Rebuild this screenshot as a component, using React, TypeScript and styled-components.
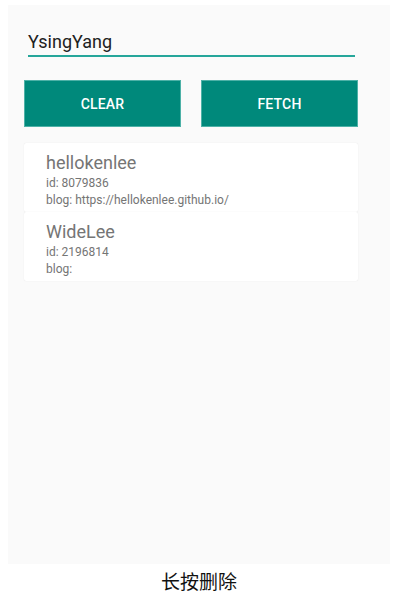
import React from "react";
import styled, { createGlobalStyle } from "styled-components";

const Global = createGlobalStyle`
  html, body { margin: 0; padding: 0; background: #ffffff; }
  body { font-family: Roboto, "Noto Sans", sans-serif; }
`;

const Page = styled.div`
  display: flex;
  flex-direction: column;
  align-items: flex-start;
  padding: 5px 0 0 8px;
`;

const Screen = styled.div`
  width: 382px;
  height: 559px;
  background: #fafafa;
  box-sizing: border-box;
  display: flex;
  flex-direction: column;
  padding: 0 0 0 16px;
`;

const InputWrap = styled.div`
  margin: 24px 0 0 4px;
  width: 327px;
  border-bottom: 2px solid #26a69a;
  height: 28px;
  box-sizing: border-box;
  font-size: 18px;
  color: #212121;
  line-height: 26px;
`;

const ButtonRow = styled.div`
  display: flex;
  gap: 20px;
  margin-top: 23px;
`;

const Button = styled.div`
  width: 157px;
  height: 47px;
  background: #00897b;
  box-shadow: 0 0 0 1px rgba(128, 203, 196, 0.6) inset;
  color: #ffffff;
  font-size: 14px;
  font-weight: 500;
  display: flex;
  align-items: center;
  justify-content: center;
  letter-spacing: 0.2px;
`;

const List = styled.div`
  display: flex;
  flex-direction: column;
  margin-top: 16px;
  width: 334px;
`;

const Card = styled.div`
  background: #ffffff;
  border-radius: 2px;
  box-shadow: 0 0 1px rgba(0, 0, 0, 0.12);
  height: 69px;
  box-sizing: border-box;
  padding: 9px 0 0 22px;
  color: #757575;
`;

const Name = styled.div`
  font-size: 18px;
  line-height: 21px;
  margin-bottom: 2px;
`;

const Info = styled.div`
  font-size: 12px;
  line-height: 17px;
`;

const Caption = styled.div`
  width: 382px;
  text-align: center;
  margin-top: 3px;
  font-family: "Noto Sans CJK SC", sans-serif;
  font-size: 19px;
  color: #111;
`;

const users = [
  { name: "hellokenlee", id: "8079836", blog: "https://hellokenlee.github.io/" },
  { name: "WideLee", id: "2196814", blog: "" },
];

export default function App() {
  return (
    <Page>
      <Global />
      <Screen>
        <InputWrap>YsingYang</InputWrap>
        <ButtonRow>
          <Button>CLEAR</Button>
          <Button>FETCH</Button>
        </ButtonRow>
        <List>
          {users.map((u) => (
            <Card key={u.id}>
              <Name>{u.name}</Name>
              <Info>id: {u.id}</Info>
              <Info>blog: {u.blog}</Info>
            </Card>
          ))}
        </List>
      </Screen>
      <Caption>长按删除</Caption>
    </Page>
  );
}
